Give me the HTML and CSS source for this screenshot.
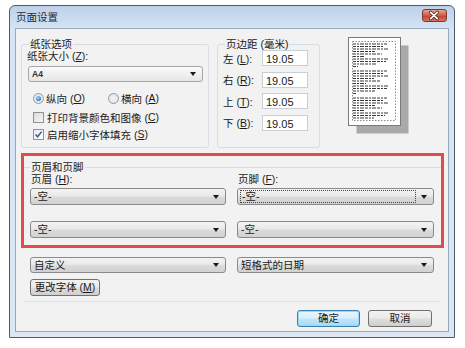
FILE: index.html
```html
<!DOCTYPE html>
<html lang="zh-CN">
<head>
<meta charset="utf-8">
<title>页面设置</title>
<link rel="stylesheet" href="styles.css">
</head>
<body>
<div class="window">
  <div class="titlebar">
    <span class="title">页面设置</span>
    <span class="close">
      <svg width="25" height="13" viewBox="0 0 25 13">
        <path d="M9 3.2L16 9.8M16 3.2L9 9.8" stroke="#5a2020" stroke-width="3.4" stroke-linecap="round"/>
        <path d="M9 3.2L16 9.8M16 3.2L9 9.8" stroke="#ffffff" stroke-width="1.8" stroke-linecap="round"/>
      </svg>
    </span>
  </div>
  <div class="client">
    <div class="top">
      <fieldset class="grp paper">
        <legend>纸张选项</legend>
        <div class="lbl">纸张大小 (<u>Z</u>):</div>
        <div class="combo white"><span class="val a4">A4</span><span class="arrow"></span></div>
        <div class="radios">
          <span class="opt"><span class="radio on"></span>纵向 (<u>O</u>)</span>
          <span class="opt o2"><span class="radio"></span>横向 (<u>A</u>)</span>
        </div>
        <div class="opt chk1"><span class="check"></span>打印背景颜色和图像 (<u>C</u>)</div>
        <div class="opt chk2"><span class="check on"><svg width="9" height="9" viewBox="0 0 9 9"><path d="M1.5 4.5L3.6 6.8L7.6 1.6" fill="none" stroke="#3c5a8c" stroke-width="1.5"/></svg></span>启用缩小字体填充 (<u>S</u>)</div>
      </fieldset>
      <fieldset class="grp margins">
        <legend>页边距 (毫米)</legend>
        <div class="mrow"><span class="mlbl">左 (<u>L</u>):</span><span class="inp">19.05</span></div>
        <div class="mrow"><span class="mlbl">右 (<u>R</u>):</span><span class="inp">19.05</span></div>
        <div class="mrow"><span class="mlbl">上 (<u>T</u>):</span><span class="inp">19.05</span></div>
        <div class="mrow"><span class="mlbl">下 (<u>B</u>):</span><span class="inp">19.05</span></div>
      </fieldset>
      <div class="preview">
        <svg width="62" height="97" viewBox="0 0 62 97">
          <rect x="8.5" y="8.5" width="52" height="88" fill="#a9a9a9"/>
          <rect x="0.5" y="0.5" width="52" height="88" fill="#ffffff" stroke="#7a7a7a"/>
          <rect x="4.5" y="4.5" width="43" height="79" fill="none" stroke="#8a8a8a" stroke-dasharray="1.5 1.5"/>
          <path d="M5 7h34M5 9.5h30M5 12h36M5 14.5h22M5 17h29M5 19.5h12M5 22h35M5 24.5h33M5 27h23M5 29.5h5M5 34h34M5 36.5h31M5 39h35M5 41.5h21M5 44h28M5 46.5h13M5 49h36M5 51.5h34M5 54h22M5 56.5h4M5 61h34M5 63.5h30M5 66h36M5 68.5h22M5 71h29M5 73.5h12M5 76h35M5 78.5h32M5 81h21" stroke="#3a3a3a" stroke-width="1.1" stroke-dasharray="3 1 2 1 4 1"/>
        </svg>
      </div>
    </div>

    <div class="redbox">
      <fieldset class="hf">
        <legend>页眉和页脚</legend>
        <div class="hfgrid">
          <div class="lbl">页眉 (<u>H</u>):</div>
          <div class="lbl">页脚 (<u>F</u>):</div>
          <div class="combo"><span class="val">-空-</span><span class="arrow"></span></div>
          <div class="combo focus"><span class="val">-空-</span><span class="arrow"></span></div>
          <div class="combo r2"><span class="val">-空-</span><span class="arrow"></span></div>
          <div class="combo r2"><span class="val">-空-</span><span class="arrow"></span></div>
        </div>
      </fieldset>
    </div>

    <div class="lower">
      <div class="combo"><span class="val">自定义</span><span class="arrow"></span></div>
      <div class="combo"><span class="val">短格式的日期</span><span class="arrow"></span></div>
    </div>
    <div class="btn font">更改字体 (<u>M</u>)</div>
    <div class="sep"></div>
    <div class="actions">
      <div class="btn ok">确定</div>
      <div class="btn cancel">取消</div>
    </div>
  </div>
</div>
</body>
</html>
```

FILE: styles.css
```css
* { box-sizing: border-box; }
html, body { margin: 0; padding: 0; background: #ffffff; }
body {
  width: 465px;
  height: 348px;
  overflow: hidden;
  font-family: "Liberation Sans", "Noto Sans CJK SC", sans-serif;
  font-size: 10.5px;
  color: #1a1a1a;
}
u { text-decoration: underline; text-underline-offset: 1px; }

.window {
  margin: 5px 0 0 9px;
  width: 446px;
  height: 333px;
  border: 1px solid #4c5b6d;
  border-radius: 6px 6px 0 0;
  background: linear-gradient(#bdd1ea, #d5e3f3 22px, #dce7f3);
  padding: 0 5px 5px 5px;
  display: flex;
  flex-direction: column;
}
.titlebar {
  height: 22px;
  display: flex;
  align-items: flex-start;
  justify-content: space-between;
}
.title {
  margin: 5px 0 0 1px;
  font-size: 10.5px;
  line-height: 12px;
  color: #1e2a3a;
}
.close {
  margin: 3px 2px 0 0;
  width: 25px;
  height: 13px;
  border: 1px solid #7a3a34;
  border-radius: 3px;
  background: linear-gradient(#e6a392, #cf5a48 50%, #c24632 55%, #d7745e);
  display: flex;
}
.close svg { margin: -1px 0 0 -1px; }

.client {
  flex: 1;
  background: #f2f2f2;
  border: 1px solid #98a9bd;
  display: flex;
  flex-direction: column;
}

.top {
  display: flex;
  align-items: flex-start;
  margin: 9px 0 0 5px;
}
.grp {
  margin: 0;
  border: 1px solid #d6dde4;
  border-radius: 3px;
  padding: 0 0 0 5px;
}
legend {
  padding: 0 1px;
  margin-left: 2px;
  line-height: 12px;
  color: #1a1a1a;
}
.paper {
  width: 188px;
  height: 110px;
}
.lbl {
  height: 13px;
  line-height: 13px;
  white-space: nowrap;
}
.combo {
  height: 17px;
  border: 1px solid #8a8a8a;
  border-radius: 3px;
  background: linear-gradient(#f4f4f4, #e9e9e9 45%, #dadada 55%, #d2d2d2);
  display: flex;
  align-items: center;
  justify-content: space-between;
  padding: 0 6px 0 3px;
  line-height: 13px;
}
.combo.white {
  margin: 3px 0 0 1px;
  width: 175px;
  height: 16px;
  background: linear-gradient(#fbfbfb, #f0f0f0 50%, #e6e6e6);
  border-color: #a5a5a5;
}
.val.a4 { font-size: 8.5px; font-weight: bold; color: #333; }
.arrow {
  flex: none;
  width: 0;
  height: 0;
  border-left: 3.5px solid transparent;
  border-right: 3.5px solid transparent;
  border-top: 4px solid #1a1a1a;
}
.radios {
  display: flex;
  margin-top: 9px;
  height: 14px;
}
.opt {
  display: flex;
  align-items: center;
  height: 14px;
  white-space: nowrap;
  margin-left: 6px;
}
.o2 { margin-left: 23px; }
.chk1 { margin-top: 5px; }
.chk2 { margin-top: 3px; }
.radio {
  width: 11px;
  height: 11px;
  border-radius: 50%;
  border: 1px solid #8f9aa4;
  background: radial-gradient(circle, #f4f4f4, #dcdfe2);
  margin-right: 2px;
  display: flex;
  align-items: center;
  justify-content: center;
}
.radio.on::after {
  content: "";
  width: 5px;
  height: 5px;
  border-radius: 50%;
  background: radial-gradient(circle at 40% 35%, #a8d8f6, #2f7fc4 70%, #1f5e98);
}
.check {
  width: 11px;
  height: 11px;
  border: 1px solid #8e9196;
  background: linear-gradient(135deg, #dcdcdc, #f6f6f6);
  margin-right: 3px;
  display: flex;
  align-items: center;
  justify-content: center;
}
.check.on { background: linear-gradient(135deg, #e4ecf6, #ffffff); }

.margins {
  width: 103px;
  height: 110px;
  margin-left: 8px;
  padding-left: 5px;
}
.mrow {
  display: flex;
  align-items: center;
  height: 16px;
  margin-top: 5.5px;
}
.mrow:first-of-type { margin-top: 0; }
.mlbl { width: 39px; white-space: nowrap; }
.inp {
  width: 46px;
  height: 16px;
  background: #ffffff;
  border: 1px solid #c9cfd6;
  padding: 2px 0 0 3px;
  line-height: 12px;
  font-size: 11px;
  color: #1a1a1a;
}
.preview {
  margin: -1px 0 0 28px;
}
.preview svg { display: block; }

.redbox {
  margin: 5px 0 0 5px;
  width: 423px;
  height: 95px;
  border: 3px solid #e14b4e;
  padding: 5px 0 0 0;
}
.hf {
  margin: 0;
  border: 0;
  border-top: 1px solid #d6dde4;
  padding: 0 0 0 6px;
}
.hf legend { margin-left: 0; }
.hfgrid {
  display: grid;
  grid-template-columns: 196px 197px;
  column-gap: 11px;
}
.hfgrid .combo { margin-top: 2px; }
.hfgrid .combo.r2 { margin-top: 16px; }
.hfgrid .lbl { padding-left: 1px; }
.combo.focus { padding-left: 2px; }
.combo.focus .val {
  flex: 1;
  height: 13px;
  border: 1px dotted #444;
  margin-right: 5px;
  padding-left: 1px;
  line-height: 11px;
}

.lower {
  display: grid;
  grid-template-columns: 196px 197px;
  column-gap: 11px;
  margin: 9px 0 0 14px;
}
.lower .combo { height: 16px; }
.btn {
  height: 17px;
  border: 1px solid #707070;
  border-radius: 3px;
  background: linear-gradient(#f2f2f2, #ebebeb 45%, #dddddd 55%, #cfcfcf);
  display: flex;
  align-items: center;
  justify-content: center;
  line-height: 13px;
  white-space: nowrap;
}
.btn.font {
  width: 70px;
  margin: 6px 0 0 14px;
}
.sep {
  margin: 5px 0 0 7px;
  width: 418px;
  height: 1px;
  background: #dfe3e7;
}
.actions {
  display: flex;
  justify-content: flex-end;
  gap: 8px;
  margin: 8px 16px 0 0;
}
.btn.ok {
  width: 63px;
  border-color: #3c7fb1;
  background: linear-gradient(#eaf6fd, #d9f0fc 45%, #bee6fd 55%, #a7d9f5);
  box-shadow: inset 0 0 0 1px #97d8fb;
}
.btn.cancel { width: 64px; }
```
